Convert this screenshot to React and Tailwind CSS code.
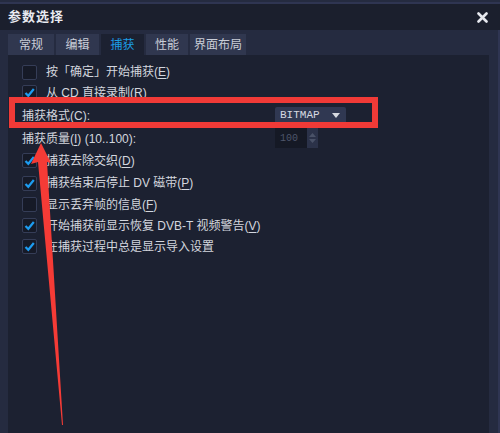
import React from 'react';

const font = { fontFamily: '"Liberation Sans", "Noto Sans CJK SC", sans-serif' };

const tabs = [
  { label: '常规', w: 'w-[46px]' },
  { label: '编辑', w: 'w-[43px]' },
  { label: '捕获', w: 'w-[43px]', active: true },
  { label: '性能', w: 'w-[42px]' },
  { label: '界面布局', w: 'w-[56px]' },
];

const Check = ({ checked }) => (
  <span className="w-[15px] h-[15px] rounded-[2px] border border-[#353d57] bg-[#161a27] flex items-center justify-center shrink-0">
    {checked && (
      <svg width="11" height="11" viewBox="0 0 11 11">
        <path d="M1.5 6 L4.3 8.8 L9.8 2" fill="none" stroke="#1d9cf0" strokeWidth="2.2" />
      </svg>
    )}
  </span>
);

// label with one underlined key letter, like "(E)"
const Label = ({ text, keyChar, tail = '' }) => (
  <span className="text-[12px] text-[#d3d6de] whitespace-pre leading-none">
    {text}
    {keyChar && (
      <>
        (<span className="underline underline-offset-2">{keyChar}</span>)
      </>
    )}
    {tail}
  </span>
);

const CheckRow = ({ h, checked, text, keyChar }) => (
  <div className={`flex items-center gap-[9px] pl-[14px] ${h}`}>
    <Check checked={checked} />
    <Label text={text} keyChar={keyChar} />
  </div>
);

export default function App() {
  return (
    <div className="w-[500px] h-[433px] overflow-hidden bg-[#252b40] border-t-2 border-t-[#31375200] relative" style={font}>
      {/* title bar */}
      <div className="h-[28px] bg-[#1b1f2d] border-t-2 border-[#2f3552] flex items-center justify-between pl-[8px] pr-[12px]">
        <span className="text-[13px] font-bold text-[#e8eaf0] tracking-[1px]">参数选择</span>
        <svg width="11" height="11" viewBox="0 0 11 11">
          <path d="M1.5 1.5 L9.5 9.5 M9.5 1.5 L1.5 9.5" stroke="#e6e8ee" strokeWidth="2.6" strokeLinecap="round" />
        </svg>
      </div>

      <div className="pl-[8px] pr-[9px] border-r-2 border-[#2f3552] h-full">
        {/* tabs */}
        <div className="flex gap-[2px] pt-[4px] h-[25px]">
          {tabs.map(t => (
            <div
              key={t.label}
              className={`${t.w} h-[21px] flex items-center justify-center text-[12px] ${t.active ? 'bg-[#1c2131] text-[#1b9de6]' : 'bg-[#30374f] text-[#c9cdd7]'}`}
            >
              {t.label}
            </div>
          ))}
        </div>

        {/* panel */}
        <div className="bg-[#1c2131] h-[400px] pt-[7px]">
          <CheckRow h="h-[20px]" checked={false} text="按「确定」开始捕获" keyChar="E" />
          <CheckRow h="h-[21px]" checked={true} text="从 CD 直接录制" keyChar="R" />

          <div className="flex items-center h-[24px] pl-[14px]">
            <div className="w-[253px]">
              <Label text="捕获格式" keyChar="C" tail=":" />
            </div>
            <div className="w-[71px] h-[17px] rounded-[2px] bg-[#303852] flex items-center justify-between pl-[5px] pr-[6px]">
              <span className="text-[11px] text-[#d6d9e0]" style={{ fontFamily: '"Liberation Mono", monospace' }}>BITMAP</span>
              <svg width="8" height="5" viewBox="0 0 8 5"><path d="M0 0 H8 L4 5 Z" fill="#d6d9e0" /></svg>
            </div>
          </div>

          <div className="flex items-center h-[22px] pl-[14px]">
            <div className="w-[253px]">
              <Label text="捕获质量" keyChar="I" tail=" (10..100):" />
            </div>
            <div className="flex h-[20px]">
              <div className="w-[32px] bg-[#151925] flex items-center pl-[5px]">
                <span className="text-[10px] text-[#4e566b]" style={{ fontFamily: '"Liberation Mono", monospace' }}>100</span>
              </div>
              <div className="w-[11px] bg-[#2b3249] flex flex-col items-center justify-center gap-[2px]">
                <svg width="7" height="4" viewBox="0 0 7 4"><path d="M0 4 L3.5 0 L7 4 Z" fill="#4a5268" /></svg>
                <svg width="7" height="4" viewBox="0 0 7 4"><path d="M0 0 H7 L3.5 4 Z" fill="#4a5268" /></svg>
              </div>
            </div>
          </div>

          <CheckRow h="h-[23px]" checked={true} text="捕获去除交织" keyChar="D" />
          <CheckRow h="h-[22px]" checked={true} text="捕获结束后停止 DV 磁带" keyChar="P" />
          <CheckRow h="h-[21px]" checked={false} text="显示丢弃帧的信息" keyChar="F" />
          <CheckRow h="h-[21px]" checked={true} text="开始捕获前显示恢复 DVB-T 视频警告" keyChar="V" />
          <CheckRow h="h-[21px]" checked={true} text="在捕获过程中总是显示导入设置" />
        </div>
      </div>

      {/* annotation: red box and arrow drawn over the dialog */}
      <div className="absolute left-[9px] top-[95px] w-[369px] h-[31px] border-[6px] border-[#f03a37] pointer-events-none" />
      <svg className="absolute left-0 top-0 pointer-events-none" width="500" height="433" viewBox="0 0 500 433">
        <polygon points="41,141 51,161 47,160 63,423 62,423 38,160 31,162" fill="#f53b36" />
      </svg>
    </div>
  );
}
